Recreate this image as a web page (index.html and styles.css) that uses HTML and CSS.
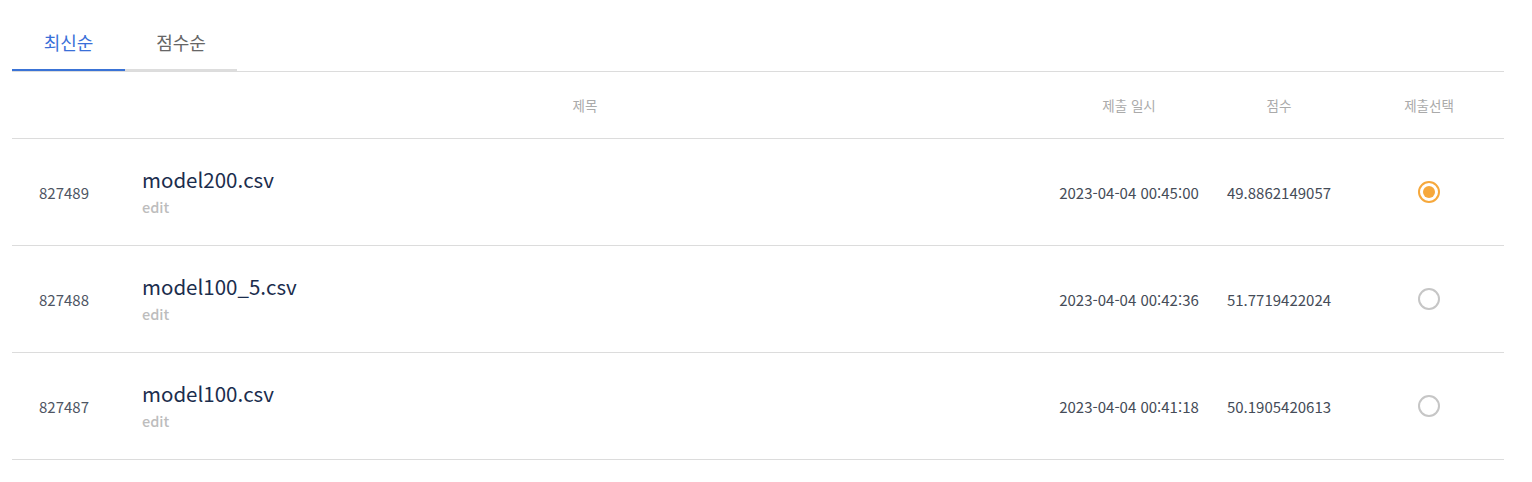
FILE: index.html
```html
<!DOCTYPE html>
<html lang="ko">
<head>
<meta charset="utf-8">
<link rel="stylesheet" href="styles.css">
</head>
<body>
<div class="wrap">
  <div class="tabs">
    <div class="tab active">최신순</div>
    <div class="tab">점수순</div>
  </div>
  <div class="table">
    <div class="row head">
      <div></div>
      <div class="c">제목</div>
      <div class="c">제출 일시</div>
      <div class="c">점수</div>
      <div class="c">제출선택</div>
    </div>
    <div class="row">
      <div class="c id">827489</div>
      <div class="title"><div class="name">model200.csv</div><div class="edit">edit</div></div>
      <div class="c val">2023-04-04 00:45:00</div>
      <div class="c val">49.8862149057</div>
      <div class="c"><span class="radio on"></span></div>
    </div>
    <div class="row">
      <div class="c id">827488</div>
      <div class="title"><div class="name">model100_5.csv</div><div class="edit">edit</div></div>
      <div class="c val">2023-04-04 00:42:36</div>
      <div class="c val">51.7719422024</div>
      <div class="c"><span class="radio"></span></div>
    </div>
    <div class="row">
      <div class="c id">827487</div>
      <div class="title"><div class="name">model100.csv</div><div class="edit">edit</div></div>
      <div class="c val">2023-04-04 00:41:18</div>
      <div class="c val">50.1905420613</div>
      <div class="c"><span class="radio"></span></div>
    </div>
  </div>
</div>
</body>
</html>
```
FILE: styles.css
```css
* { box-sizing: border-box; }
html, body { margin: 0; padding: 0; background: #fff; }
body { font-family: "Noto Sans CJK KR", "Noto Sans", sans-serif; }
.wrap { padding: 0 28px 0 12px; }
.tabs { display: flex; }
.tab {
  width: 112px;
  height: 71px;
  padding-top: 14px;
  display: flex;
  align-items: center;
  justify-content: center;
  font-size: 18px;
  color: #666;
  border-bottom: 2px solid #ddd;
}
.tab.active { color: #3a6fd8; border-bottom-color: #3a73d6; width: 113px; }
.table { border-top: 1px solid #dcdcdc; margin-top: 0; }
.row {
  display: grid;
  grid-template-columns: 104px 1fr 150px 150px 150px;
  height: 107px;
  border-bottom: 1px solid #dcdcdc;
  align-items: center;
}
.row.head { height: 67px; font-size: 13.5px; color: #aaa; }
.c { text-align: center; display: flex; justify-content: center; align-items: center; }
.id { font-size: 15px; color: #4e5563; }
.val { font-size: 15px; color: #454c58; }
.title { padding-left: 26px; }
.name { font-size: 20.5px; line-height: 26px; color: #1b2d4d; margin-top: -3px; }
.edit { font-size: 14.5px; line-height: 16px; margin-top: 7px; color: #bdbdbd; font-weight: 500; }
.radio {
  width: 22px; height: 22px;
  border: 2px solid #c6c6c6;
  border-radius: 50%;
  display: flex; align-items: center; justify-content: center;
}
.radio.on { border: 2.5px solid #f6a83c; }
.radio.on::after {
  content: "";
  width: 12px; height: 12px; border-radius: 50%;
  background: #f6a83c;
}
```
